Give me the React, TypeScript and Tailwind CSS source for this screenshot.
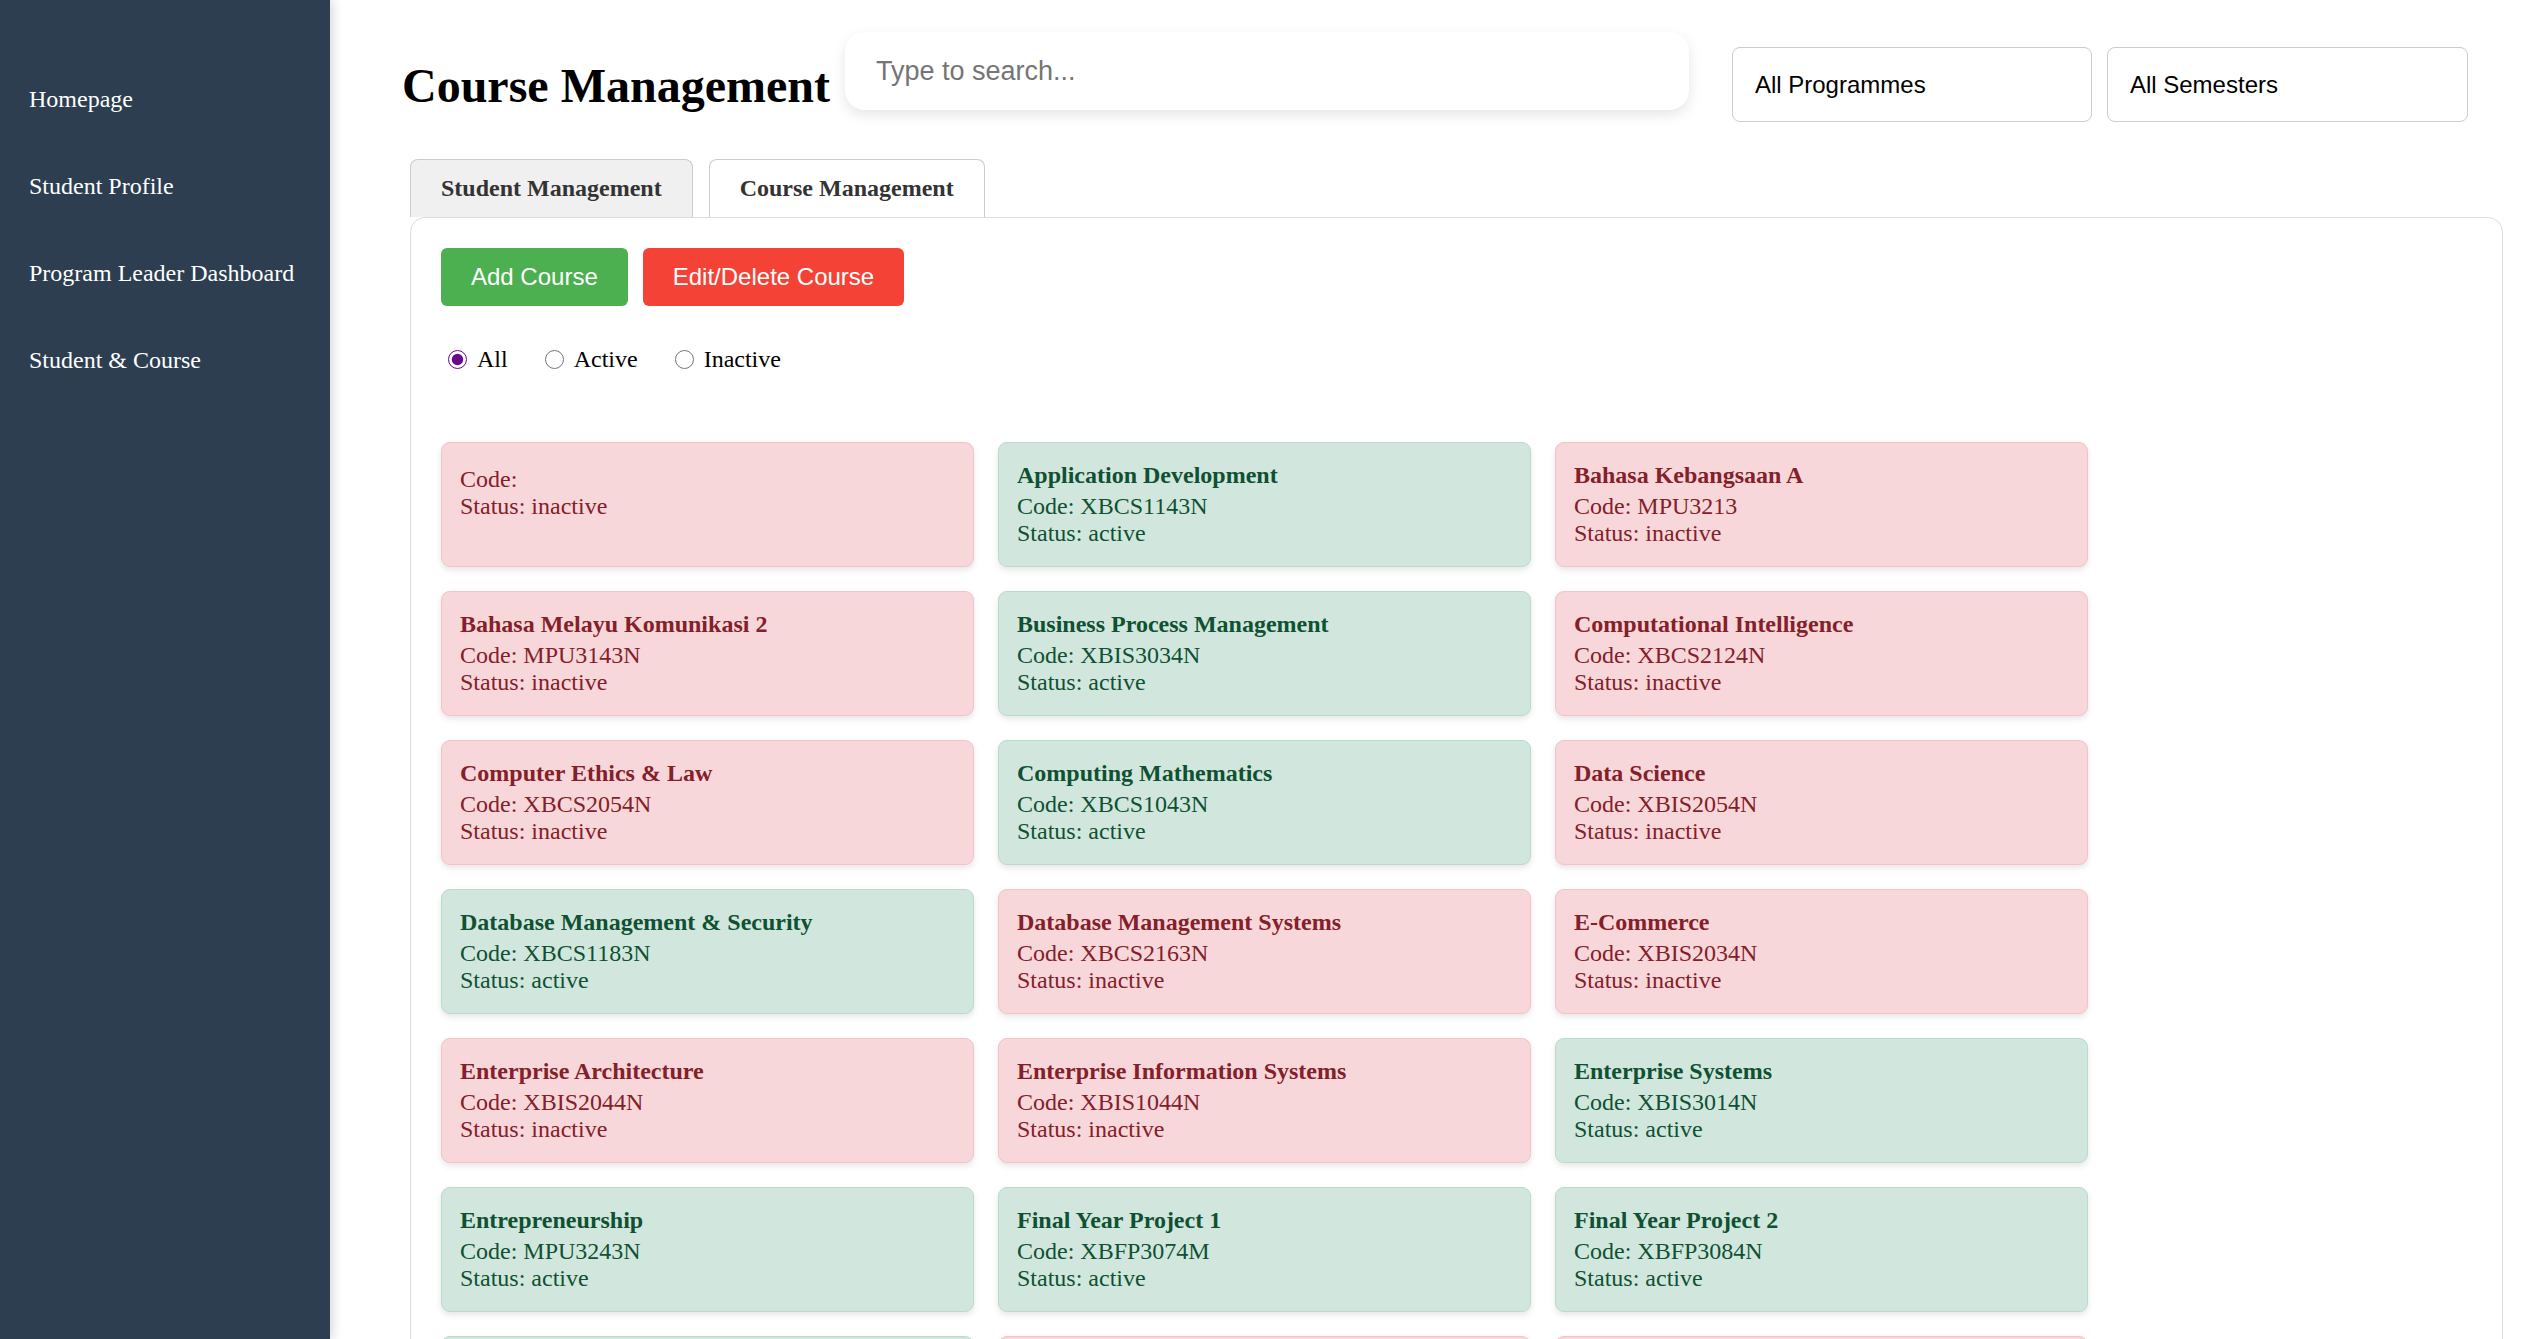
import { useState } from "react";

type Course = { name: string; code: string; status: "active" | "inactive" };

const courses: Course[] = [
    { name: "", code: "", status: "inactive" },
    { name: "Application Development", code: "XBCS1143N", status: "active" },
    { name: "Bahasa Kebangsaan A", code: "MPU3213", status: "inactive" },
    { name: "Bahasa Melayu Komunikasi 2", code: "MPU3143N", status: "inactive" },
    { name: "Business Process Management", code: "XBIS3034N", status: "active" },
    { name: "Computational Intelligence", code: "XBCS2124N", status: "inactive" },
    { name: "Computer Ethics & Law", code: "XBCS2054N", status: "inactive" },
    { name: "Computing Mathematics", code: "XBCS1043N", status: "active" },
    { name: "Data Science", code: "XBIS2054N", status: "inactive" },
    { name: "Database Management & Security", code: "XBCS1183N", status: "active" },
    { name: "Database Management Systems", code: "XBCS2163N", status: "inactive" },
    { name: "E-Commerce", code: "XBIS2034N", status: "inactive" },
    { name: "Enterprise Architecture", code: "XBIS2044N", status: "inactive" },
    { name: "Enterprise Information Systems", code: "XBIS1044N", status: "inactive" },
    { name: "Enterprise Systems", code: "XBIS3014N", status: "active" },
    { name: "Entrepreneurship", code: "MPU3243N", status: "active" },
    { name: "Final Year Project 1", code: "XBFP3074M", status: "active" },
    { name: "Final Year Project 2", code: "XBFP3084N", status: "active" },
    { name: "Human Computer Interaction", code: "XBCS2034N", status: "active" },
    { name: "Information Security", code: "XBCS3064N", status: "inactive" },
    { name: "Internet of Things", code: "XBCS3024N", status: "inactive" },
];

const navItems = ["Homepage", "Student Profile", "Program Leader Dashboard", "Student & Course"];

function CourseCard({ course }: { course: Course }) {
    const active = course.status === "active";
    return (
        <div
            className={
                active
                    ? "bg-[#d1e7dd] border border-[#badbcc] text-[#0f5132] rounded-[9px] px-[18px] py-[19px] shadow-[0_3px_6px_rgba(0,0,0,0.1)]"
                    : "bg-[#f8d7da] border border-[#f5c2c7] text-[#842029] rounded-[9px] px-[18px] py-[19px] shadow-[0_3px_6px_rgba(0,0,0,0.1)]"
            }>
            <h3 className="font-bold text-[24px] mb-[4px]">{course.name}</h3>
            <p className="text-[24px]">Code: {course.code}</p>
            <p className="text-[24px]">Status: {course.status}</p>
        </div>
    );
}

export default function App() {
    const [filter, setFilter] = useState("all");
    const [tab, setTab] = useState("course");

    const shown = courses.filter((c) => filter === "all" || c.status === filter);

    return (
        <div className="flex h-screen overflow-hidden bg-white font-['Liberation_Serif',serif] leading-[normal]">
            <aside className="relative z-10 w-[330px] shrink-0 bg-[#2c3e50] pt-[56px] px-[29px] shadow-[3px_0_10px_rgba(0,0,0,0.15)]">
                <nav className="flex flex-col">
                    {navItems.map((item) => (
                        <a key={item} href="#" className="py-[30px] text-[24px] text-white">
                            {item}
                        </a>
                    ))}
                </nav>
            </aside>

            <main className="flex-1 min-w-0 pl-[72px] pr-[29px]">
                {/* header */}
                <div className="flex items-start pt-[32px]">
                    <h1 className="mt-[26px] text-[48px] font-bold text-black whitespace-nowrap">Course Management</h1>
                    <input
                        type="text"
                        placeholder="Type to search..."
                        className="ml-[15px] w-[844px] h-[78px] rounded-[20px] bg-white px-[31px] text-[27px] font-['Liberation_Sans',Arial,sans-serif] placeholder:text-[#757575] shadow-[0_5px_14px_rgba(0,0,0,0.1)] outline-none"
                    />
                    <select className="ml-[43px] mt-[15px] w-[360px] h-[75px] appearance-none rounded-[8px] border border-[#ccc] bg-white px-[22px] text-[24px] text-black font-['Liberation_Sans',Arial,sans-serif]">
                        <option>All Programmes</option>
                    </select>
                    <select className="ml-[15px] mt-[15px] w-[361px] h-[75px] appearance-none rounded-[8px] border border-[#ccc] bg-white px-[22px] text-[24px] text-black font-['Liberation_Sans',Arial,sans-serif]">
                        <option>All Semesters</option>
                    </select>
                </div>

                <div className="ml-[8px] mt-[37px]">
                    {/* tabs */}
                    <div className="flex gap-[16px]">
                        <button
                            onClick={() => setTab("student")}
                            className={
                                tab === "student"
                                    ? "px-[30px] py-[15px] border border-b-0 border-[#ccc] rounded-t-[8px] bg-white text-[24px] font-bold text-[#333]"
                                    : "px-[30px] py-[15px] border border-b-0 border-[#ccc] rounded-t-[8px] bg-[#f0f0f0] text-[24px] font-bold text-[#333]"
                            }>
                            Student Management
                        </button>
                        <button
                            onClick={() => setTab("course")}
                            className={
                                tab === "course"
                                    ? "px-[30px] py-[15px] border border-b-0 border-[#ccc] rounded-t-[8px] bg-white text-[24px] font-bold text-[#333]"
                                    : "px-[30px] py-[15px] border border-b-0 border-[#ccc] rounded-t-[8px] bg-[#f0f0f0] text-[24px] font-bold text-[#333]"
                            }>
                            Course Management
                        </button>
                    </div>

                    {/* panel */}
                    <div className="border border-[#ddd] rounded-[15px] bg-white p-[30px] min-h-[1200px]">
                        <div className="flex">
                            <button className="mr-[15px] px-[30px] py-[15px] rounded-[6px] bg-[#4caf50] text-white text-[24px] font-['Liberation_Sans',Arial,sans-serif]">
                                Add Course
                            </button>
                            <button className="px-[30px] py-[15px] rounded-[6px] bg-[#f44336] text-white text-[24px] font-['Liberation_Sans',Arial,sans-serif]">
                                Edit/Delete Course
                            </button>
                        </div>

                        <div className="flex items-center mt-[40px] text-[24px] text-black">
                            {[
                                ["all", "All"],
                                ["active", "Active"],
                                ["inactive", "Inactive"],
                            ].map(([value, label]) => (
                                <label key={value} className="flex items-center mr-[30px]">
                                    <input
                                        type="radio"
                                        name="status"
                                        value={value}
                                        checked={filter === value}
                                        onChange={() => setFilter(value)}
                                        className="ml-[7px] mr-[4px] w-[19px] h-[19px] accent-[#6a0a8a]"
                                    />
                                    <span className="ml-[6px]">{label}</span>
                                </label>
                            ))}
                        </div>

                        <div className="mt-[69px] grid grid-cols-[repeat(3,533px)] gap-6">
                            {shown.map((c, i) => (
                                <CourseCard key={i} course={c} />
                            ))}
                        </div>
                    </div>
                </div>
            </main>
        </div>
    );
}
